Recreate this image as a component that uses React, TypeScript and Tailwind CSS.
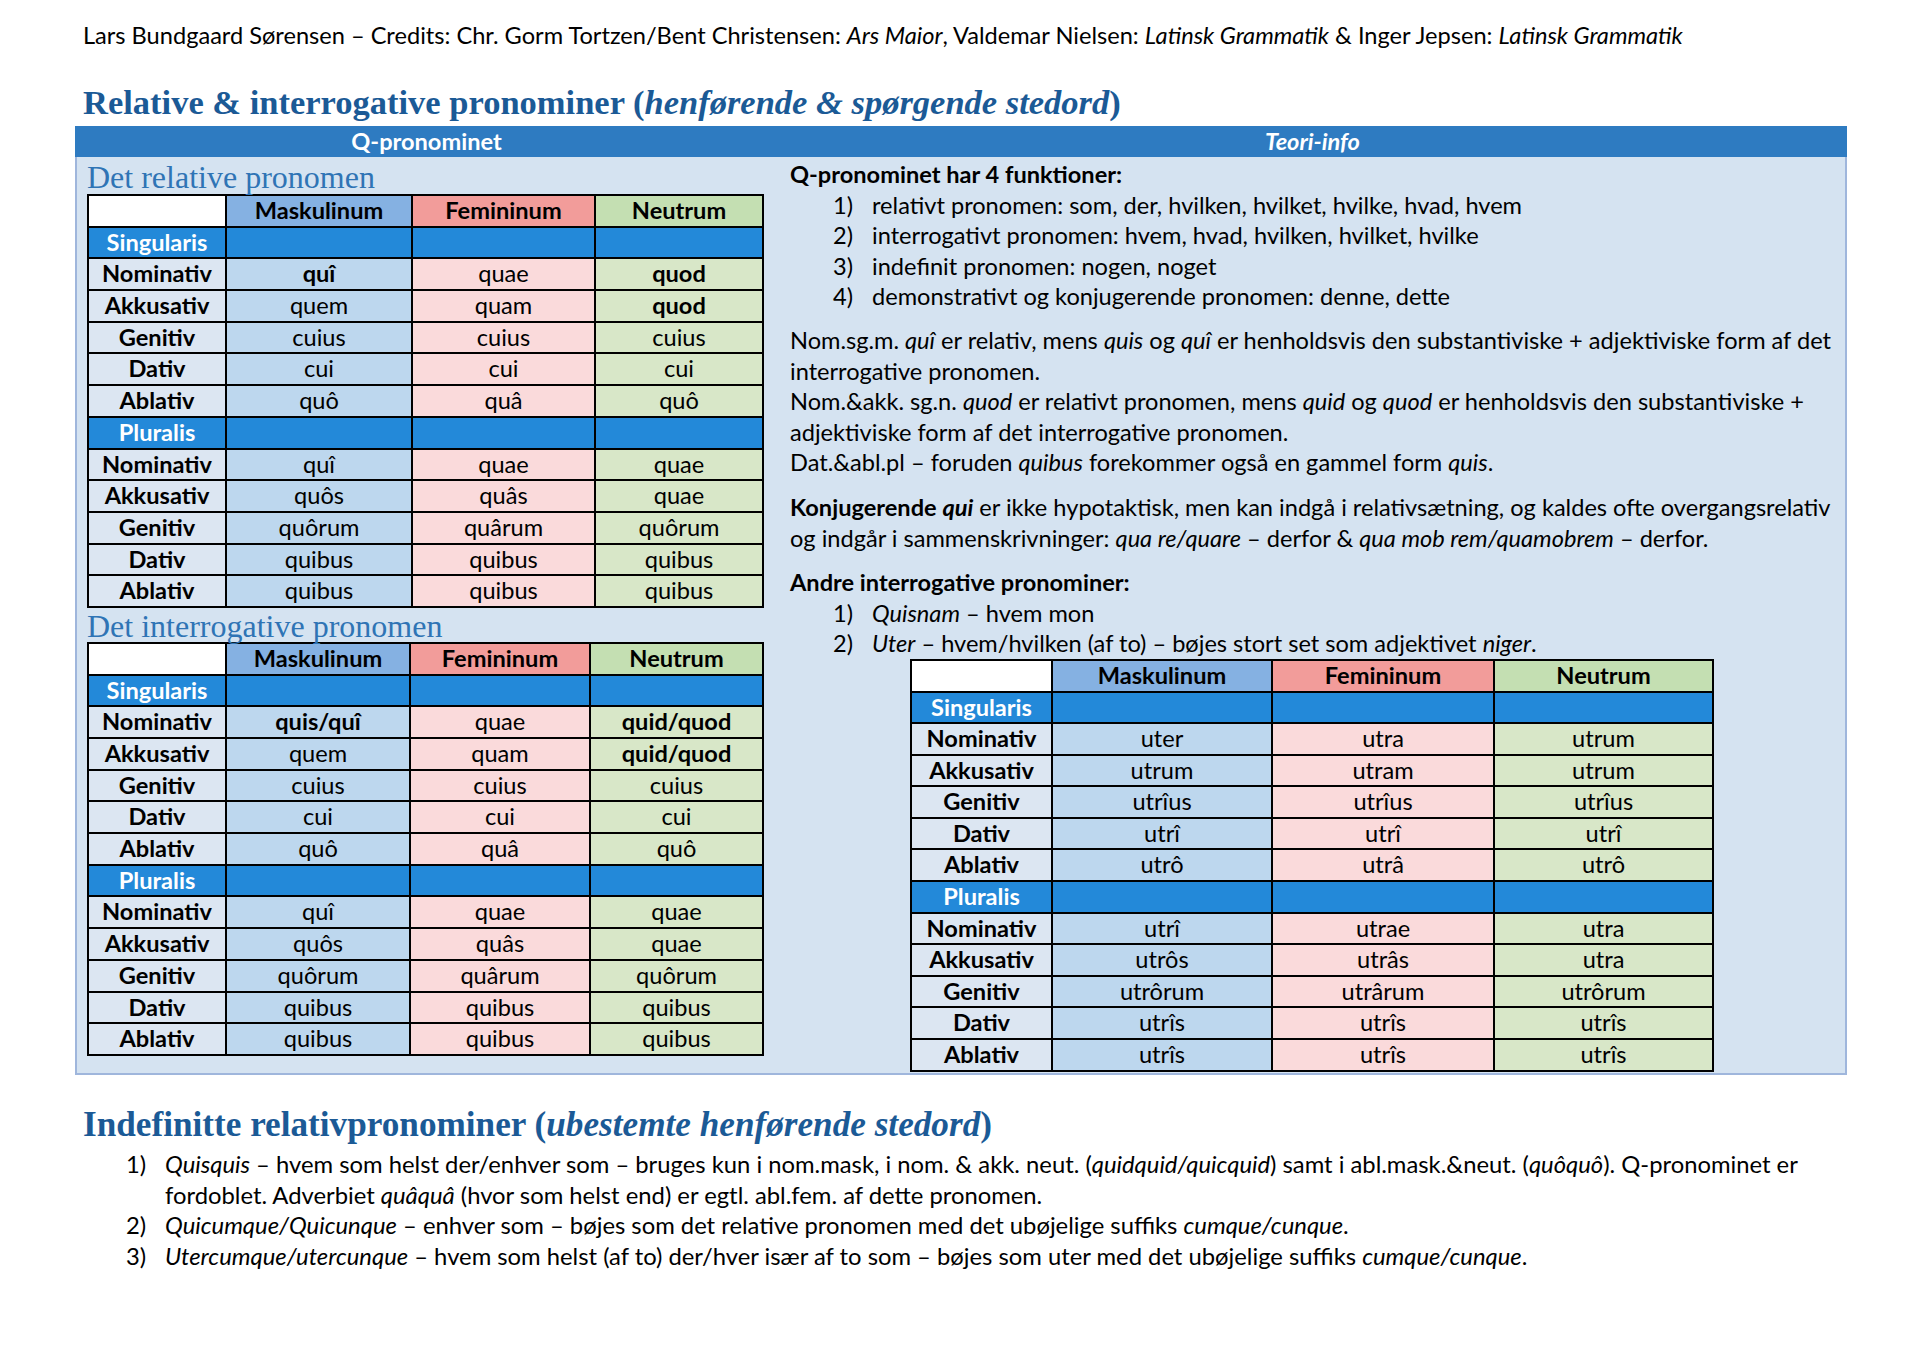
import type { ReactNode } from 'react'

type Cell = string

interface TableProps {
  cols: string
  rowH: string
  sing: Cell[][]
  plur: Cell[][]
}

const labels = ['Nominativ', 'Akkusativ', 'Genitiv', 'Dativ', 'Ablativ']

// a leading * marks a bold cell
const txt = (c: Cell) =>
  c.startsWith('*') ? <span className="font-bold">{c.slice(1)}</span> : c

const NumberRow = ({ label }: { label: string }) => (
  <>
    <div className="bg-[#2389d9] flex items-center justify-center font-bold text-white">
      {label}
    </div>
    <div className="bg-[#2389d9]" />
    <div className="bg-[#2389d9]" />
    <div className="bg-[#2389d9]" />
  </>
)

const CaseRows = ({ rows }: { rows: Cell[][] }) => (
  <>
    {rows.map((r, i) => (
      <div key={i} className="contents">
        <div className="bg-[#dce6f2] flex items-center justify-center font-bold">
          {labels[i]}
        </div>
        <div className="bg-[#bdd7ee] flex items-center justify-center">{txt(r[0])}</div>
        <div className="bg-[#fadadb] flex items-center justify-center">{txt(r[1])}</div>
        <div className="bg-[#d8e7c8] flex items-center justify-center">{txt(r[2])}</div>
      </div>
    ))}
  </>
)

const CaseTable = ({ cols, rowH, sing, plur }: TableProps) => (
  <div className={`grid ${cols} ${rowH} gap-[2px] p-[2px] bg-black text-[23.6px] leading-none text-black`}>
    <div className="bg-white" />
    <div className="bg-[#85b1e2] flex items-center justify-center font-bold">Maskulinum</div>
    <div className="bg-[#f29c9a] flex items-center justify-center font-bold">Femininum</div>
    <div className="bg-[#c4dfb2] flex items-center justify-center font-bold">Neutrum</div>
    <NumberRow label="Singularis" />
    <CaseRows rows={sing} />
    <NumberRow label="Pluralis" />
    <CaseRows rows={plur} />
  </div>
)

const plurQ = [
  ['quî', 'quae', 'quae'],
  ['quôs', 'quâs', 'quae'],
  ['quôrum', 'quârum', 'quôrum'],
  ['quibus', 'quibus', 'quibus'],
  ['quibus', 'quibus', 'quibus'],
]

const relSing = [
  ['*quî', 'quae', '*quod'],
  ['quem', 'quam', '*quod'],
  ['cuius', 'cuius', 'cuius'],
  ['cui', 'cui', 'cui'],
  ['quô', 'quâ', 'quô'],
]

const intSing = [
  ['*quis/quî', 'quae', '*quid/quod'],
  ['quem', 'quam', '*quid/quod'],
  ['cuius', 'cuius', 'cuius'],
  ['cui', 'cui', 'cui'],
  ['quô', 'quâ', 'quô'],
]

const uterSing = [
  ['uter', 'utra', 'utrum'],
  ['utrum', 'utram', 'utrum'],
  ['utrîus', 'utrîus', 'utrîus'],
  ['utrî', 'utrî', 'utrî'],
  ['utrô', 'utrâ', 'utrô'],
]

const uterPlur = [
  ['utrî', 'utrae', 'utra'],
  ['utrôs', 'utrâs', 'utra'],
  ['utrôrum', 'utrârum', 'utrôrum'],
  ['utrîs', 'utrîs', 'utrîs'],
  ['utrîs', 'utrîs', 'utrîs'],
]

const Item = ({ n, children }: { n: string; children: ReactNode }) => (
  <div className="flex">
    <div className="w-[39px] shrink-0">{n}</div>
    <div>{children}</div>
  </div>
)

export default function App() {
  return (
    <div className="w-[1920px] h-[1358px] bg-white text-black font-['Lato','Noto_Sans',sans-serif] whitespace-nowrap">
      <div className="pt-[21px] pl-[83px] text-[23.6px] leading-[28px]">
        Lars Bundgaard Sørensen – Credits: Chr. Gorm Tortzen/Bent Christensen: <i>Ars Maior</i>,
        Valdemar Nielsen: <i>Latinsk Grammatik</i> &amp; Inger Jepsen: <i>Latinsk Grammatik</i>
      </div>

      <h1 className="mt-[33px] pl-[83px] h-[40px] leading-[40px] text-[34.5px] font-bold text-[#1b5a96] font-['Liberation_Serif',serif]">
        Relative &amp; interrogative pronominer (<i>henførende &amp; spørgende stedord</i>)
      </h1>

      <div className="mt-[4px] ml-[75px] w-[1772px]">
        <div className="flex h-[31px] bg-[#2e7bc1] text-white font-bold text-[23.6px] leading-[31px]">
          <div className="w-[703px] text-center">Q-pronominet</div>
          <div className="flex-1 text-center italic">Teori-info</div>
        </div>

        <div className="flex h-[918px] bg-[#d5e3f1] border-x-2 border-b-2 border-[#9fb6dc]">
          <div className="w-[701px] pl-[10px]">
            <div className="h-[37px] leading-[40px] text-[32px] text-[#2f74b5] font-['Liberation_Serif',serif]">
              Det relative pronomen
            </div>
            <div className="w-[677px]">
              <CaseTable
                cols="grid-cols-[136px_184px_181px_166px]"
                rowH="auto-rows-[29.7px]"
                sing={relSing}
                plur={plurQ}
              />
            </div>
            <div className="h-[34px] leading-[36px] text-[32px] text-[#2f74b5] font-['Liberation_Serif',serif]">
              Det interrogative pronomen
            </div>
            <div className="w-[677px]">
              <CaseTable
                cols="grid-cols-[136px_182px_178px_171px]"
                rowH="auto-rows-[29.7px]"
                sing={intSing}
                plur={plurQ}
              />
            </div>
          </div>

          <div className="flex-1 pl-[12px] pt-[2px] text-[23.6px] leading-[30.6px]">
            <div className="font-bold">Q-pronominet har 4 funktioner:</div>
            <div className="pl-[43px]">
              <Item n="1)">relativt pronomen: som, der, hvilken, hvilket, hvilke, hvad, hvem</Item>
              <Item n="2)">interrogativt pronomen: hvem, hvad, hvilken, hvilket, hvilke</Item>
              <Item n="3)">indefinit pronomen: nogen, noget</Item>
              <Item n="4)">demonstrativt og konjugerende pronomen: denne, dette</Item>
            </div>

            <p className="mt-[13px]">
              Nom.sg.m. <i>quî</i> er relativ, mens <i>quis</i> og <i>quî</i> er henholdsvis den
              substantiviske + adjektiviske form af det
              <br />
              interrogative pronomen.
            </p>
            <p>
              Nom.&amp;akk. sg.n. <i>quod</i> er relativt pronomen, mens <i>quid</i> og{' '}
              <i>quod</i> er henholdsvis den substantiviske +
              <br />
              adjektiviske form af det interrogative pronomen.
            </p>
            <p>
              Dat.&amp;abl.pl – foruden <i>quibus</i> forekommer også en gammel form <i>quis</i>.
            </p>

            <p className="mt-[14px]">
              <b>
                Konjugerende <i>qui</i>
              </b>{' '}
              er ikke hypotaktisk, men kan indgå i relativsætning, og kaldes ofte overgangsrelativ
              <br />
              og indgår i sammenskrivninger: <i>qua re/quare</i> – derfor &amp;{' '}
              <i>qua mob rem/quamobrem</i> – derfor.
            </p>

            <div className="mt-[14px] font-bold">Andre interrogative pronominer:</div>
            <div className="pl-[43px]">
              <Item n="1)">
                <i>Quisnam</i> – hvem mon
              </Item>
              <Item n="2)">
                <i>Uter</i> – hvem/hvilken (af to) – bøjes stort set som adjektivet <i>niger</i>.
              </Item>
            </div>

            <div className="ml-[120px] w-[804px]">
              <CaseTable
                cols="grid-cols-[139px_218px_220px_217px]"
                rowH="auto-rows-[29.6px]"
                sing={uterSing}
                plur={uterPlur}
              />
            </div>
          </div>
        </div>
      </div>

      <h2 className="mt-[30px] pl-[83px] h-[40px] leading-[40px] text-[35.2px] font-bold text-[#1b5a96] font-['Liberation_Serif',serif]">
        Indefinitte relativpronominer (<i>ubestemte henførende stedord</i>)
      </h2>

      <div className="mt-[4px] pl-[126px] text-[23.8px] leading-[30.6px]">
        <Item n="1)">
          <i>Quisquis</i> – hvem som helst der/enhver som – bruges kun i nom.mask, i nom. &amp; akk.
          neut. (<i>quidquid/quicquid</i>) samt i abl.mask.&amp;neut. (<i>quôquô</i>).
          Q-pronominet er
          <br />
          fordoblet. Adverbiet <i>quâquâ</i> (hvor som helst end) er egtl. abl.fem. af dette
          pronomen.
        </Item>
        <Item n="2)">
          <i>Quicumque/Quicunque</i> – enhver som – bøjes som det relative pronomen med det
          ubøjelige suffiks <i>cumque/cunque</i>.
        </Item>
        <Item n="3)">
          <i>Utercumque/utercunque</i> – hvem som helst (af to) der/hver især af to som – bøjes
          som uter med det ubøjelige suffiks <i>cumque/cunque</i>.
        </Item>
      </div>
    </div>
  )
}
